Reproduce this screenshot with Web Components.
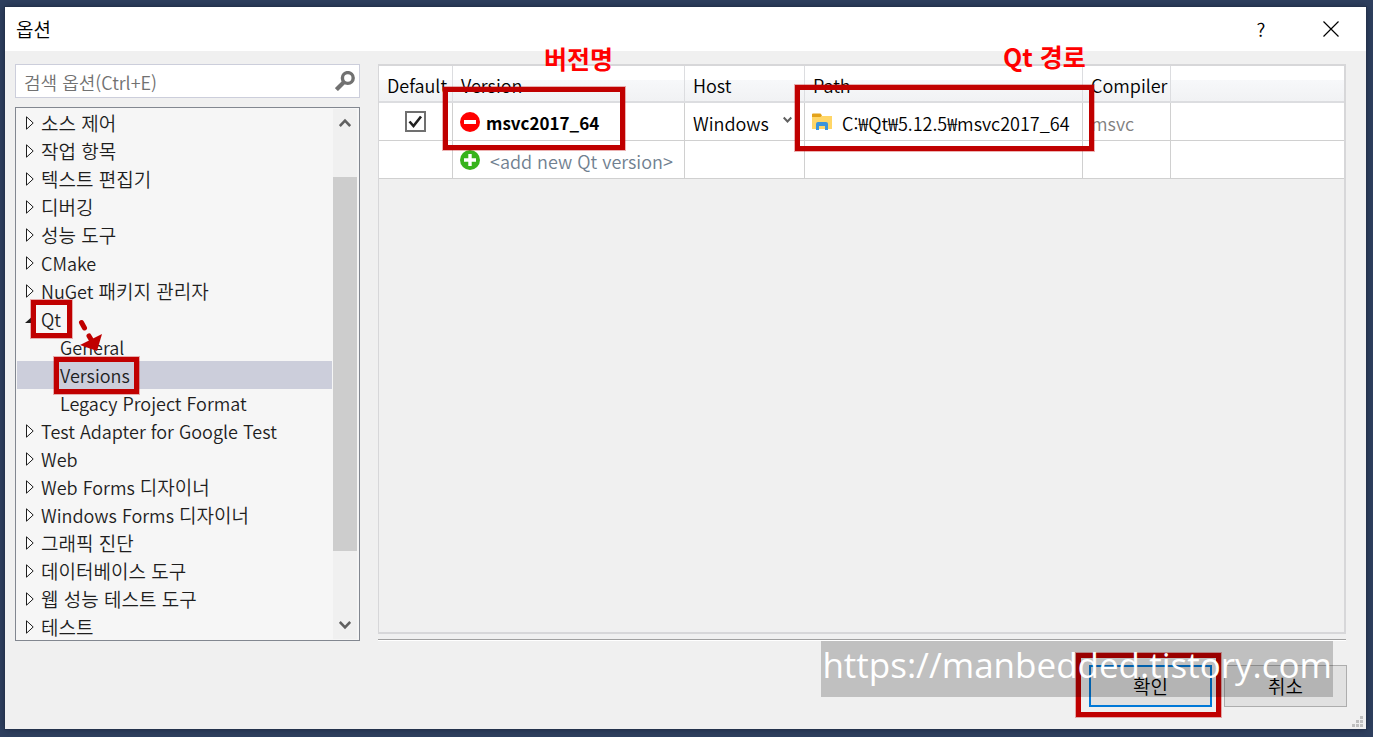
<!DOCTYPE html>
<html lang="ko">
<head>
<meta charset="utf-8">
<meta name="viewport" content="width=device-width, initial-scale=1">
<title>옵션</title>
<style>
    body {
        margin: 0;
        background: #2f405f;
        color: #1e1e1e;
        font-family: "Noto Sans CJK KR", "Noto Sans", sans-serif;
        font-size: 18px;
        font-weight: 350;
        line-height: 28px;
    }
</style>
</head>
<body>
<option-dialog heading="옵션">
    <search-box slot="side" label="검색 옵션(Ctrl+E)"></search-box>
    <option-tree slot="side"></option-tree>
    <version-table slot="main"></version-table>
    <dialog-button slot="actions" primary>확인</dialog-button>
    <dialog-button slot="actions">취소</dialog-button>
    <water-mark slot="overlay">https://manbedded.tistory.com</water-mark>
</option-dialog>

<script>
// Red frame laid over its parent. The parent sets the inset.
class MarkBox extends HTMLElement {
    connectedCallback() {
        this.attachShadow({ mode: 'open' });
        this.shadowRoot.innerHTML = `
            <style>
                :host {
                    position: absolute;
                    z-index: 2;
                    box-sizing: border-box;
                    border: 5px solid #c00000;
                    outline: 1px solid rgba(192, 0, 0, 0.3);
                    pointer-events: none;
                }
                .caption {
                    position: absolute;
                    left: var(--caption-left, 0);
                    bottom: 100%;
                    padding-bottom: 20px;
                    color: #ff0000;
                    font-size: 25px;
                    font-weight: 700;
                    line-height: 28px;
                    white-space: nowrap;
                }
            </style>
            <div class="caption"><slot></slot></div>
        `;
    }
}

class OptionDialog extends HTMLElement {
    connectedCallback() {
        this.attachShadow({ mode: 'open' });
        const heading = this.getAttribute('heading') || '';

        this.shadowRoot.innerHTML = `
            <style>
                :host {
                    display: flex;
                    flex-direction: column;
                    box-sizing: border-box;
                    min-height: 100vh;
                    padding: 7px 7px 8px 5px;
                }
                .window {
                    position: relative;
                    flex: 1;
                    display: flex;
                    flex-direction: column;
                    background: #f0f0f0;
                    box-shadow: 0 0 0 1px #24324c, 0 0 8px #1c2840;
                }
                header {
                    display: flex;
                    align-items: center;
                    height: 44px;
                    padding-left: 11px;
                    background: #fff;
                    color: #000;
                }
                h1 {
                    flex: 1;
                    margin: 0;
                    font-size: 19px;
                    font-weight: inherit;
                }
                header button {
                    display: grid;
                    place-items: center;
                    width: 70px;
                    height: 44px;
                    padding: 0;
                    border: 0;
                    background: none;
                    color: #000;
                    font: inherit;
                    font-size: 19px;
                }
                .content {
                    flex: 1;
                    display: grid;
                    grid-template-columns: 345px minmax(0, 1fr);
                    gap: 18px;
                    padding: 13px 20px 0 10px;
                }
                .side, .main {
                    display: flex;
                    flex-direction: column;
                }
                .side {
                    gap: 9px;
                }
                .main::after {
                    content: "";
                    height: 1px;
                    margin-top: 5px;
                    background: #a0a0a0;
                    border-bottom: 1px solid #fff;
                }
                footer {
                    display: flex;
                    justify-content: flex-end;
                    gap: 12px;
                    padding: 24px 19px 22px;
                }
                .grip {
                    position: absolute;
                    right: 3px;
                    bottom: 2px;
                }
            </style>
            <div class="window">
                <header>
                    <h1>${heading}</h1>
                    <button type="button" aria-label="도움말">?</button>
                    <button type="button" aria-label="닫기">
                        <svg width="16" height="16" viewBox="0 0 16 16" fill="none" stroke="#000" stroke-width="1.2">
                            <path d="M.5 .5l15 15M15.5 .5l-15 15"/>
                        </svg>
                    </button>
                </header>
                <div class="content">
                    <div class="side"><slot name="side"></slot></div>
                    <div class="main"><slot name="main"></slot></div>
                </div>
                <footer><slot name="actions"></slot></footer>
                <svg class="grip" width="11" height="11" viewBox="0 0 11 11" fill="#bfbfbf">
                    <path d="M8 0h3v3H8zM4 4h3v3H4zM8 4h3v3H8zM0 8h3v3H0zM4 8h3v3H4zM8 8h3v3H8z"/>
                </svg>
                <slot name="overlay"></slot>
            </div>
        `;
    }
}

class SearchBox extends HTMLElement {
    connectedCallback() {
        this.attachShadow({ mode: 'open' });
        const label = this.getAttribute('label') || '';

        this.shadowRoot.innerHTML = `
            <style>
                :host {
                    display: flex;
                    align-items: center;
                    box-sizing: border-box;
                    height: 34px;
                    border: 1px solid #cccedb;
                    background: #fff;
                }
                input {
                    flex: 1;
                    min-width: 0;
                    padding: 2px 8px 0;
                    border: 0;
                    outline: 0;
                    background: none;
                    font: inherit;
                }
                input::placeholder {
                    color: #717171;
                    opacity: 1;
                }
                button {
                    display: flex;
                    padding: 0 4px;
                    border: 0;
                    background: none;
                }
            </style>
            <input type="search" placeholder="${label}" aria-label="${label}">
            <button type="button" aria-label="검색">
                <svg width="20" height="20" viewBox="0 0 20 20" fill="none" stroke="#717171">
                    <circle cx="12.8" cy="7" r="5.4" stroke-width="3.4"/>
                    <path d="M8.8 11.2L1.4 18.6" stroke-width="4.2"/>
                </svg>
            </button>
        `;
    }
}

class TreeRow extends HTMLElement {
    connectedCallback() {
        this.attachShadow({ mode: 'open' });
        const state = this.getAttribute('state');
        let arrow = '';
        if (state === 'closed') {
            arrow = '<svg width="9" height="14" viewBox="0 0 9 14"><path d="M1.5 .8v12.4L8.2 7z" fill="#fff" stroke="#1e1e1e"/></svg>';
        } else if (state === 'open') {
            arrow = '<svg width="9" height="14" viewBox="0 0 9 14"><path d="M9 3v8H0z" fill="#1e1e1e"/></svg>';
        }

        this.shadowRoot.innerHTML = `
            <style>
                :host {
                    position: relative;
                    display: flex;
                    height: 28px;
                    padding-left: 8px;
                    white-space: nowrap;
                }
                :host([child]) {
                    padding-left: 27px;
                }
                :host([selected]) {
                    background: #cccedb;
                }
                .arrow {
                    display: grid;
                    place-items: center;
                    width: 9px;
                    margin-right: 7px;
                }
                .text {
                    position: relative;
                }
                mark-box {
                    inset: -5px -11px -5px -10px;
                }
                :host([child]) mark-box {
                    inset: -4px -9px -5px -6px;
                }
                .pointer {
                    position: absolute;
                    left: 36px;
                    top: 12px;
                    z-index: 3;
                }
            </style>
            <span class="arrow">${arrow}</span>
            <span class="text">
                <slot></slot>
                ${this.hasAttribute('marked') ? '<mark-box></mark-box>' : ''}
                ${this.hasAttribute('pointer') ? `
                <svg class="pointer" width="26" height="36" viewBox="0 0 26 36">
                    <path d="M4.5 5.5l3 5.5M12 19l3 5" stroke="#c00000" stroke-width="5" stroke-linecap="round"/>
                    <path d="M3 28L25 17 20 34z" fill="#c00000"/>
                </svg>` : ''}
            </span>
        `;
    }
}

class OptionTree extends HTMLElement {
    connectedCallback() {
        this.attachShadow({ mode: 'open' });

        const rows = [
            { text: '소스 제어' },
            { text: '작업 항목' },
            { text: '텍스트 편집기' },
            { text: '디버깅' },
            { text: '성능 도구' },
            { text: 'CMake' },
            { text: 'NuGet 패키지 관리자' },
            { text: 'Qt', attrs: 'state="open" marked pointer aria-expanded="true"' },
            { text: 'General', attrs: 'child' },
            { text: 'Versions', attrs: 'child selected marked aria-selected="true"' },
            { text: 'Legacy Project Format', attrs: 'child' },
            { text: 'Test Adapter for Google Test' },
            { text: 'Web' },
            { text: 'Web Forms 디자이너' },
            { text: 'Windows Forms 디자이너' },
            { text: '그래픽 진단' },
            { text: '데이터베이스 도구' },
            { text: '웹 성능 테스트 도구' },
            { text: '테스트' }
        ];

        // Hangul is set one step larger than Latin
        const label = text => text.replace(/[가-힣][가-힣 ]*/g, '<span class="hangul">$&</span>');

        this.shadowRoot.innerHTML = `
            <style>
                :host {
                    flex: 1;
                    display: flex;
                    box-sizing: border-box;
                    padding: 1px;
                    border: 1px solid #828790;
                    background: #f6f6f6;
                }
                .list {
                    flex: 1;
                    height: 530px;
                    min-width: 0;
                    overflow: hidden;
                }
                .hangul {
                    font-size: 19px;
                }
                .scroll {
                    display: flex;
                    flex-direction: column;
                    width: 24px;
                    margin: 0 1px;
                    background: #f0f0f0;
                }
                .scroll button {
                    display: grid;
                    place-items: center;
                    height: 28px;
                    padding: 0;
                    border: 0;
                    background: none;
                }
                .track {
                    flex: 1;
                    display: grid;
                    grid-template-rows: 40fr 374fr 60fr;
                }
                .thumb {
                    grid-row: 2;
                    background: #cdcdcd;
                }
            </style>
            <div class="list" role="tree">
                ${rows.map(row => `<tree-row role="treeitem" ${row.attrs || 'state="closed"'}>${label(row.text)}</tree-row>`).join('')}
            </div>
            <div class="scroll">
                <button type="button" aria-label="위로">
                    <svg width="12" height="10" viewBox="0 0 12 10" fill="none" stroke="#606060" stroke-width="2.6"><path d="M.8 8L6 2.6 11.2 8"/></svg>
                </button>
                <div class="track"><div class="thumb"></div></div>
                <button type="button" aria-label="아래로">
                    <svg width="12" height="10" viewBox="0 0 12 10" fill="none" stroke="#606060" stroke-width="2.6"><path d="M.8 2L6 7.4 11.2 2"/></svg>
                </button>
            </div>
        `;
    }
}

class VersionTable extends HTMLElement {
    connectedCallback() {
        this.attachShadow({ mode: 'open' });
        this.shadowRoot.innerHTML = `
            <style>
                :host {
                    flex: 1;
                    box-sizing: border-box;
                    border: 2px solid #d7d7d9;
                    border-left-width: 1px;
                }
                table {
                    width: 100%;
                    table-layout: fixed;
                    border-collapse: separate;
                    border-spacing: 0;
                    background: #fff;
                    color: #000;
                }
                th, td {
                    position: relative;
                    box-sizing: border-box;
                    padding: 2px 8px 0;
                    border-right: 1px solid #d0d0d0;
                    border-bottom: 1px solid #d0d0d0;
                    text-align: left;
                    font-weight: inherit;
                    white-space: nowrap;
                }
                th {
                    height: 37px;
                    border-color: #dcdde0;
                    border-bottom-width: 2px;
                    background: linear-gradient(#fff 40%, #f7f8fa 40%, #f1f2f4);
                }
                td {
                    height: 38px;
                }
                th:last-child, td:last-child {
                    border-right: 0;
                }
                .default { width: 74px; }
                .version { width: 232px; }
                .host { width: 120px; }
                .path { width: 278px; }
                .compiler { width: 88px; }
                .line {
                    display: flex;
                    align-items: center;
                    gap: 6px;
                }
                .line.wide {
                    gap: 10px;
                }
                .tick {
                    display: flex;
                    justify-content: center;
                }
                input {
                    appearance: none;
                    width: 21px;
                    height: 21px;
                    margin: 0 0 2px;
                    border: 2px solid #707070;
                    background: #fff;
                }
                input:checked {
                    background: #fff url('data:image/svg+xml,<svg xmlns="http://www.w3.org/2000/svg" viewBox="0 0 17 17"><path d="M2.5 8.5l4 4.5L14 3.5" fill="none" stroke="%23212121" stroke-width="2.6"/></svg>');
                }
                td button {
                    display: flex;
                    padding: 0;
                    margin: 0 0 2px -1px;
                    border: 0;
                    background: none;
                }
                .name {
                    font-size: 17px;
                    font-weight: 700;
                }
                .add {
                    color: #708090;
                }
                .muted {
                    color: #808080;
                }
                .pick {
                    display: flex;
                    align-items: center;
                }
                select {
                    appearance: none;
                    flex: 1;
                    min-width: 0;
                    padding: 0;
                    border: 0;
                    background: none;
                    color: inherit;
                    font: inherit;
                }
                .pick svg {
                    flex: none;
                    margin: 0 4px 6px 0;
                }
                .version mark-box {
                    inset: -16px 59px -10px -10px;
                    --caption-left: 96px;
                }
                .path mark-box {
                    inset: -18px -12px -11px -10px;
                    --caption-left: 203px;
                }
            </style>
            <table>
                <thead>
                    <tr>
                        <th class="default">Default</th>
                        <th class="version">Version</th>
                        <th class="host">Host</th>
                        <th class="path">Path</th>
                        <th class="compiler">Compiler</th>
                        <th></th>
                    </tr>
                </thead>
                <tbody>
                    <tr>
                        <td><div class="tick"><input type="checkbox" aria-label="Default" checked></div></td>
                        <td class="version">
                            <div class="line">
                                <button type="button" aria-label="Remove version">
                                    <svg width="20" height="20" viewBox="0 0 20 20"><circle cx="10" cy="10" r="10" fill="#f00"/><path d="M4 8h12v4H4z" fill="#fff"/></svg>
                                </button>
                                <span class="name">msvc2017_64</span>
                            </div>
                            <mark-box>버전명</mark-box>
                        </td>
                        <td>
                            <div class="pick">
                                <select aria-label="Host"><option>Windows</option></select>
                                <svg width="9" height="8" viewBox="0 0 9 8" fill="none" stroke="#606060" stroke-width="2"><path d="M.7 1.5l3.8 4 3.8-4"/></svg>
                            </div>
                        </td>
                        <td class="path">
                            <div class="line wide">
                                <button type="button" aria-label="Browse">
                                    <svg width="20" height="18" viewBox="0 0 20 18">
                                        <path d="M0 1h9l1 2h10v13H0z" fill="#ffd667"/>
                                        <path d="M0 1.500Q0 .5 1 .5h7.500l1.300 2L8.500 4H0z" fill="#e3a21a"/>
                                        <path d="M4 17v-6q0-2 2-2h8q2 0 2 2v6h-3v-4H7v4z" fill="#3a94dc"/>
                                    </svg>
                                </button>
                                <span>C:₩Qt₩5.12.5₩msvc2017_64</span>
                            </div>
                            <mark-box>Qt 경로</mark-box>
                        </td>
                        <td class="muted">msvc</td>
                        <td></td>
                    </tr>
                    <tr>
                        <td></td>
                        <td>
                            <div class="line wide">
                                <button type="button" aria-label="Add version">
                                    <svg width="20" height="20" viewBox="0 0 20 20"><circle cx="10" cy="10" r="10" fill="#37b31c"/><path d="M8.300 4h3.400v4.300H16v3.400h-4.300V16H8.300v-4.300H4V8.300h4.300z" fill="#fff"/></svg>
                                </button>
                                <span class="add">&lt;add new Qt version&gt;</span>
                            </div>
                        </td>
                        <td></td>
                        <td></td>
                        <td></td>
                        <td></td>
                    </tr>
                </tbody>
            </table>
        `;
    }
}

class DialogButton extends HTMLElement {
    connectedCallback() {
        this.attachShadow({ mode: 'open' });
        this.shadowRoot.innerHTML = `
            <style>
                :host {
                    position: relative;
                    display: block;
                }
                button {
                    width: 123px;
                    height: 42px;
                    padding: 0;
                    border: 1px solid #adadad;
                    background: #e1e1e1;
                    color: #000;
                    font: inherit;
                    font-size: 19px;
                }
                :host([primary]) button {
                    border: 2px solid #0078d7;
                }
                mark-box {
                    inset: -12px -9px -10px -13px;
                }
            </style>
            <button type="button"><slot></slot></button>
            ${this.hasAttribute('primary') ? '<mark-box></mark-box>' : ''}
        `;
    }
}

class WaterMark extends HTMLElement {
    connectedCallback() {
        this.attachShadow({ mode: 'open' });
        this.shadowRoot.innerHTML = `
            <style>
                :host {
                    position: absolute;
                    right: 33px;
                    bottom: 32px;
                    z-index: 4;
                    padding: 0 1px 8px;
                    background: rgba(0, 0, 0, 0.2);
                    color: #fff;
                    font-family: "Open Sans", "Noto Sans", sans-serif;
                    font-size: 35px;
                    font-weight: 400;
                    line-height: 48px;
                    pointer-events: none;
                }
            </style>
            <slot></slot>
        `;
    }
}

customElements.define('mark-box', MarkBox);
customElements.define('tree-row', TreeRow);
customElements.define('option-tree', OptionTree);
customElements.define('search-box', SearchBox);
customElements.define('version-table', VersionTable);
customElements.define('dialog-button', DialogButton);
customElements.define('water-mark', WaterMark);
customElements.define('option-dialog', OptionDialog);
</script>
</body>
</html>
